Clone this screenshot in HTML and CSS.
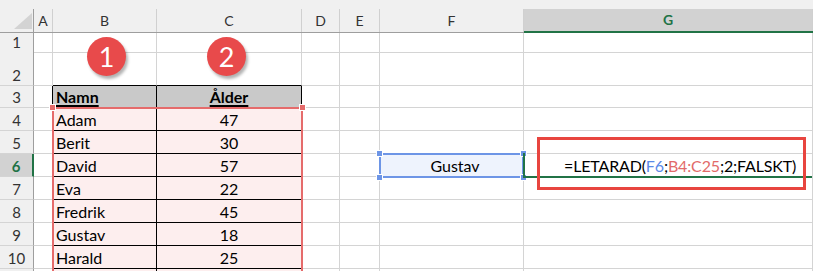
FILE: index.html
```html
<!DOCTYPE html>
<html lang="sv">
<head>
    <meta charset="UTF-8">
    <meta name="viewport" content="width=device-width, initial-scale=1.0">
    <title>LETARAD</title>
    <link rel="stylesheet" href="styles.css">
</head>
<body>
    <div class="sheet">
        <!-- column headers -->
        <div class="row head">
            <div><span class="lbl corner">
                <svg width="18" height="16" viewBox="0 0 18 16"><polygon points="18,0 18,16 0,16" fill="#d3d3d3"/></svg>
            </span></div>
            <div><span class="lbl">A</span></div>
            <div><span class="lbl">B</span></div>
            <div><span class="lbl">C</span></div>
            <div><span class="lbl">D</span></div>
            <div><span class="lbl">E</span></div>
            <div><span class="lbl">F</span></div>
            <div class="act"><span class="lbl">G</span></div>
        </div>

        <div class="row r1">
            <div class="rh">1</div>
            <div></div>
            <div><span class="badge b1">1</span></div>
            <div><span class="badge b2">2</span></div>
            <div></div><div></div><div></div><div></div>
        </div>
        <div class="row r2">
            <div class="rh">2</div>
            <div></div>
            <div class="ttop"></div>
            <div class="ttop"></div>
            <div></div><div></div><div></div><div></div>
        </div>
        <div class="row r3">
            <div class="rh">3</div>
            <div class="tleft"></div>
            <div class="t hd">Namn</div>
            <div class="t hd c">Ålder</div>
            <div></div><div></div><div></div><div></div>
        </div>
        <div class="row">
            <div class="rh">4</div>
            <div class="tleft"></div>
            <div class="t pk">
                Adam
                <div class="sel"><span class="hdl tl"></span><span class="hdl tr"></span></div>
            </div>
            <div class="t pk c">47</div>
            <div></div><div></div><div></div><div></div>
        </div>
        <div class="row">
            <div class="rh">5</div>
            <div class="tleft"></div>
            <div class="t pk">Berit</div>
            <div class="t pk c">30</div>
            <div></div><div></div><div></div><div></div>
        </div>
        <div class="row">
            <div class="rh act">6</div>
            <div class="tleft"></div>
            <div class="t pk">David</div>
            <div class="t pk c">57</div>
            <div></div><div></div>
            <div class="lookup">
                Gustav
                <div class="ref-frame">
                    <span class="hdl tl"></span><span class="hdl tr"></span>
                    <span class="hdl bl"></span><span class="hdl br"></span>
                </div>
            </div>
            <div class="formula">
                =LETARAD(<span class="ref1">F6</span>;<span class="ref2">B4:C25</span>;2;FALSKT)
                <div class="active"></div>
                <div class="callout"></div>
            </div>
        </div>
        <div class="row">
            <div class="rh">7</div>
            <div class="tleft"></div>
            <div class="t pk">Eva</div>
            <div class="t pk c">22</div>
            <div></div><div></div><div></div><div></div>
        </div>
        <div class="row">
            <div class="rh">8</div>
            <div class="tleft"></div>
            <div class="t pk">Fredrik</div>
            <div class="t pk c">45</div>
            <div></div><div></div><div></div><div></div>
        </div>
        <div class="row">
            <div class="rh">9</div>
            <div class="tleft"></div>
            <div class="t pk">Gustav</div>
            <div class="t pk c">18</div>
            <div></div><div></div><div></div><div></div>
        </div>
        <div class="row">
            <div class="rh">10</div>
            <div class="tleft"></div>
            <div class="t pk">Harald</div>
            <div class="t pk c">25</div>
            <div></div><div></div><div></div><div></div>
        </div>
        <div class="row">
            <div class="rh"></div>
            <div class="tleft"></div>
            <div class="t pk"></div>
            <div class="t pk c"></div>
            <div></div><div></div><div></div><div></div>
        </div>
    </div>
</body>
</html>
```

FILE: styles.css
```css
body {
    margin: 0;
    padding: 0;
    background: #fff;
    font-family: Lato, "Liberation Sans", sans-serif;
    overflow: hidden;
}
.sheet {
    width: 813px;
}
.row {
    display: grid;
    grid-template-columns: 34px 19px 104px 145px 38px 40px 144px 289px;
    height: 23px;
}
.row > div {
    box-sizing: border-box;
    position: relative;
    display: flex;
    align-items: flex-end;
    padding: 0 3px 1px;
    border-right: 1px solid #d4d4d4;
    border-bottom: 1px solid #d4d4d4;
    font-size: 16px;
    line-height: 18px;
    color: #000;
    white-space: nowrap;
}
.r1 { height: 18px; }
.r2 { height: 35px; }
.r3 { height: 22px; }

/* column headers */
.head {
    height: 33px;
    background: #f0f0f0;
}
.head > div {
    padding: 0;
    border-right: none;
    border-bottom: 1px solid #9e9e9e;
}
.head .lbl {
    box-sizing: border-box;
    flex: 1;
    height: 23px;
    display: flex;
    align-items: center;
    justify-content: center;
    border-right: 1px solid #d0d0d0;
    font-size: 14px;
    color: #333;
}
.head .corner {
    justify-content: flex-end;
    align-items: flex-end;
    padding: 0 1px 3px 0;
    border-right-color: #9e9e9e;
}
.head .act {
    border-bottom: 2px solid #217346;
}
.head .act .lbl {
    height: 22px;
    background: #d2d2d2;
    color: #217346;
    font-weight: bold;
}

/* row headers */
.row > .rh {
    justify-content: center;
    padding: 0 0 1px;
    background: #f0f0f0;
    border-right-color: #9e9e9e;
    font-size: 15px;
    color: #333;
}
.row > .rh.act {
    background: #d2d2d2;
    border-right: 2px solid #217346;
    color: #217346;
    font-weight: bold;
}

/* table */
.row > .ttop { border-bottom-color: #000; }
.row > .tleft { border-right-color: #000; }
.row > .t {
    border-right-color: #000;
    border-bottom-color: #000;
}
.hd {
    background: #c9c9c9;
    font-weight: bold;
    text-decoration: underline;
    text-decoration-thickness: 2px;
    text-underline-offset: 2px;
}
.pk { background: #fdeeee; }
.row > .c { justify-content: center; }

.badge {
    position: absolute;
    top: 4px;
    width: 39px;
    height: 39px;
    border-radius: 50%;
    background: #e84a4b;
    box-shadow: 2px 3px 3px rgba(0, 0, 0, 0.3);
    color: #fff;
    font-size: 27px;
    line-height: 39px;
    text-align: center;
    z-index: 2;
}
.b1 { left: 34px; }
.b2 { left: 50px; }

/* selection frames */
.sel {
    position: absolute;
    left: -1px;
    top: -1px;
    width: 251px;
    height: 200px;
    box-sizing: border-box;
    border: 2px solid #e56b6b;
    z-index: 2;
}
.hdl {
    position: absolute;
    width: 5px;
    height: 5px;
    background: #e56b6b;
    border: 1px solid #fff;
}
.tl { left: -5px; top: -5px; }
.tr { right: -5px; top: -5px; }
.bl { left: -5px; bottom: -5px; }
.br { right: -5px; bottom: -5px; }

.row > .lookup {
    justify-content: center;
    padding-left: 10px;
    background: #eef3fd;
}
.ref-frame {
    position: absolute;
    left: -1px;
    top: -1px;
    right: -1px;
    bottom: -2px;
    border: 2px solid #6d95e6;
    z-index: 2;
}
.ref-frame .hdl { background: #6d95e6; }

.row > .formula {
    padding-left: 40px;
    letter-spacing: -0.15px;
}
.ref1 { color: #5a8ae8; }
.ref2 { color: #e26a6a; }
.active {
    position: absolute;
    left: -1px;
    top: -1px;
    right: 0;
    bottom: -2px;
    border-left: 2px solid #217346;
    border-bottom: 2px solid #217346;
    z-index: 3;
}
.callout {
    position: absolute;
    left: 13px;
    top: -17px;
    width: 269px;
    height: 53px;
    box-sizing: border-box;
    border: 3px solid #e8453f;
    z-index: 4;
}
```
